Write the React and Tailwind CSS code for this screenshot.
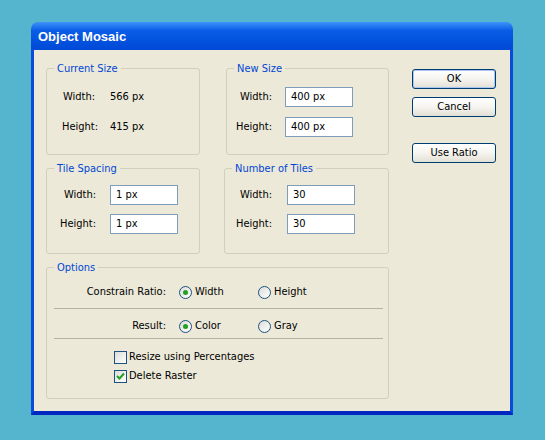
import React from "react";

const Group = ({ title, className, children }) => (
  <fieldset className={`border border-[#D0D0BF] rounded-[3px] ${className}`}>
    <legend className="ml-[7px] px-[3px] text-[#0046D5] leading-[13px]">{title}</legend>
    {children}
  </fieldset>
);

const Field = ({ label, value, labelW, gap }) => (
  <div className="flex items-center h-[20px]">
    <span className={`text-right ${labelW}`}>{label}</span>
    <div
      className={`${gap} w-[68px] h-[20px] border border-[#7F9DB9] bg-white pl-[5px] flex items-center`}
    >
      {value}
    </div>
  </div>
);

const Radio = ({ label, checked, className }) => (
  <span className={`inline-flex items-center ${className}`}>
    <span className="w-[13px] h-[13px] rounded-full border border-[#1C5180] bg-gradient-to-br from-[#DCDCD7] to-white flex items-center justify-center">
      {checked && <span className="w-[5px] h-[5px] rounded-full bg-[#21A121]" />}
    </span>
    <span className="ml-[3px]">{label}</span>
  </span>
);

const Check = ({ label, checked }) => (
  <div className="flex items-center h-[13px]">
    <span className="w-[13px] h-[13px] border border-[#1C5180] bg-gradient-to-br from-[#DCDCD7] to-white flex items-center justify-center">
      {checked && (
        <svg width="9" height="9" viewBox="0 0 9 9">
          <path d="M1 4 L3.5 6.5 L8 1.5" stroke="#21A121" strokeWidth="2" fill="none" />
        </svg>
      )}
    </span>
    <span className="ml-[2px]">{label}</span>
  </div>
);

const Button = ({ children, focused, className = "" }) => (
  <div
    className={`w-[84px] h-[20px] rounded-[3px] border border-[#003C74] bg-gradient-to-b from-white via-[#F5F4EF] to-[#E3E0D5] flex items-center justify-center ${
      focused ? "shadow-[inset_0_0_0_1px_#A9C6F2]" : ""
    } ${className}`}
  >
    {children}
  </div>
);

export default function App() {
  return (
    <div className="w-full h-[440px] bg-[#55B5CF] pt-[22px] pl-[31px] font-['DejaVu_Sans_Condensed','Liberation_Sans',sans-serif] text-[11px] text-black">
      <div className="w-[482px]">
        {/* title bar */}
        <div className="h-[28px] rounded-t-[7px] bg-gradient-to-b from-[#3D93FA] via-[#0A5CE6] via-30% to-[#0049D6] pl-[7px] pt-[7px]">
          <span className="text-white font-bold text-[13px] leading-[16px] font-['Liberation_Sans',sans-serif]">Object Mosaic</span>
        </div>
        {/* body */}
        <div className="h-[365px] bg-[#ECE9D8] border-x-[3px] border-b-[4px] border-x-[#0A4ADB] border-b-[#0028C0] flex pl-[12px] pt-[12px]">
          <div className="w-[343px] flex flex-col">
            <div className="flex">
              <Group title="Current Size" className="w-[154px] h-[93px]">
                <div className="mt-[12px] flex flex-col gap-[9px] pl-[16px]">
                  <div className="flex items-center h-[21px]">
                    <span className="w-[47px]">Width:</span>
                    <span>566 px</span>
                  </div>
                  <div className="flex items-center h-[20px]">
                    <span className="w-[47px] -ml-[1px]">Height:</span>
                    <span className="ml-[1px]">415 px</span>
                  </div>
                </div>
              </Group>
              <Group title="New Size" className="ml-[26px] w-[163px] h-[93px]">
                <div className="mt-[12px] flex flex-col gap-[10px]">
                  <Field label="Width:" value="400 px" labelW="w-[45px]" gap="ml-[13px]" />
                  <Field label="Height:" value="400 px" labelW="w-[45px]" gap="ml-[13px]" />
                </div>
              </Group>
            </div>
            <div className="flex mt-[7px]">
              <Group title="Tile Spacing" className="w-[154px] h-[92px]">
                <div className="mt-[10px] flex flex-col gap-[9px]">
                  <Field label="Width:" value="1 px" labelW="w-[49px]" gap="ml-[14px]" />
                  <Field label="Height:" value="1 px" labelW="w-[49px]" gap="ml-[14px]" />
                </div>
              </Group>
              <Group title="Number of Tiles" className="ml-[24px] w-[165px] h-[92px]">
                <div className="mt-[10px] flex flex-col gap-[9px]">
                  <Field label="Width:" value="30" labelW="w-[47px]" gap="ml-[15px]" />
                  <Field label="Height:" value="30" labelW="w-[47px]" gap="ml-[15px]" />
                </div>
              </Group>
            </div>
            <Group title="Options" className="mt-[7px] w-[343px] h-[138px]">
              <div className="mt-[10px] flex items-center h-[16px]">
                <span className="w-[119px] text-right">Constrain Ratio:</span>
                <Radio label="Width" checked className="ml-[13px] w-[79px]" />
                <Radio label="Height" />
              </div>
              <div className="mt-[8px] ml-[7px] mr-[5px] h-px bg-[#B5B2A3]" />
              <div className="mt-[9px] flex items-center h-[16px]">
                <span className="w-[119px] text-right">Result:</span>
                <Radio label="Color" checked className="ml-[13px] w-[79px]" />
                <Radio label="Gray" />
              </div>
              <div className="mt-[4px] ml-[7px] mr-[5px] h-px bg-[#B5B2A3]" />
              <div className="mt-[12px] pl-[67px] flex flex-col gap-[6px]">
                <Check label="Resize using Percentages" />
                <Check label="Delete Raster" checked />
              </div>
            </Group>
          </div>
          <div className="ml-[23px] pt-[7px] flex flex-col">
            <Button focused>OK</Button>
            <Button className="mt-[8px]">Cancel</Button>
            <Button className="mt-[26px]">Use Ratio</Button>
          </div>
        </div>
      </div>
    </div>
  );
}
